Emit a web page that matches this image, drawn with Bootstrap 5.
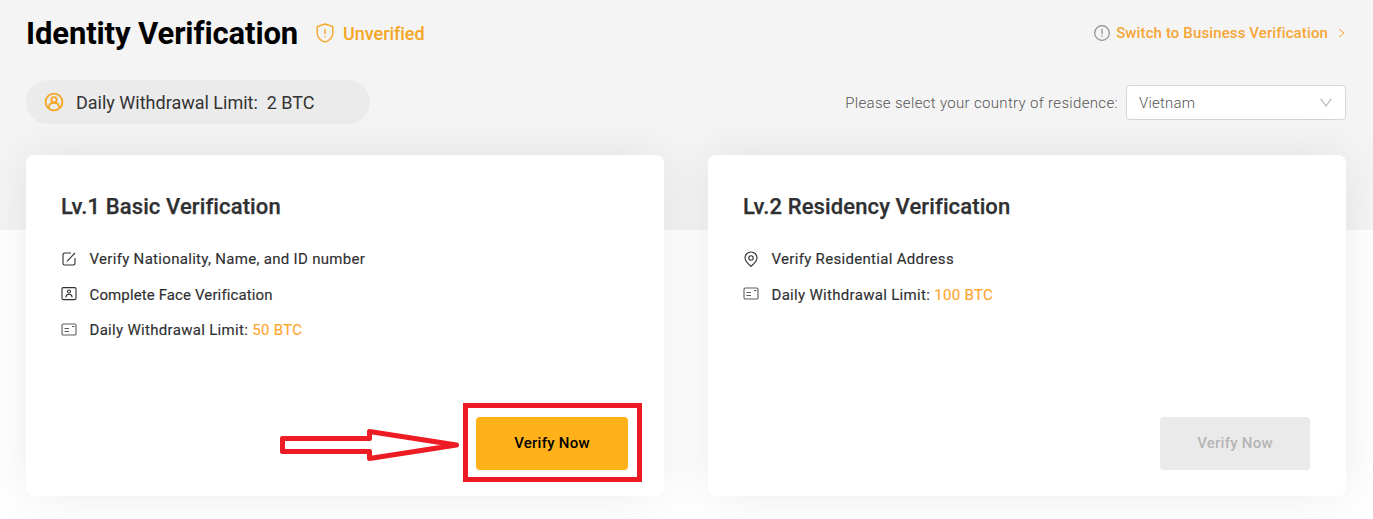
<!DOCTYPE html>
<html lang="en">
<head>
<meta charset="utf-8">
<meta name="viewport" content="width=device-width, initial-scale=1">
<title>Identity Verification</title>
<link href="https://cdn.jsdelivr.net/npm/bootstrap@5.3.0/dist/css/bootstrap.min.css" rel="stylesheet">
<style>
body{font-family:Roboto,"Liberation Sans",sans-serif;background:linear-gradient(#f4f4f4 230px,#fff 230px) no-repeat;color:#2f3032;height:519px;overflow:hidden}
svg{display:block;flex:none;fill:none;stroke:currentColor}
.page-wrap{padding:12px 27px 0 26px}
.head-row{height:42px}
.page-title{font-size:31px;font-weight:700;color:#000;letter-spacing:-.12px;line-height:42px;padding-top:1px}
.status{color:#f5a623;font-size:18px;font-weight:500;margin-left:18px;letter-spacing:-.05px}
.status-text{margin-left:9px}
.switch-link{color:#f5a636;font-size:15px;font-weight:500;letter-spacing:.12px;text-decoration:none}
.info-icon{color:#8c8c8c;margin-right:6px}
.next-icon{margin:0 1px 0 10px}
.limit-row{margin-top:25px;height:46px}
.limit-pill{background:#ebebeb;width:344px;height:44px;padding-left:18px;font-size:18px;color:#333;margin-top:-1px}
.limit-pill svg{color:#f5a623;margin-right:12px}
.limit-text{padding-top:2px}
.country-label{font-size:15px;font-weight:300;color:#555;letter-spacing:.33px;padding-top:2px}
.country-box{width:220px;height:35px;border:1px solid #d5d5d5;border-radius:4px;font-size:15px;font-weight:300;color:#555;letter-spacing:.2px;padding:0 13px 0 12px}
.country-name{padding-top:2px}
.country-box svg{color:#b8b8b8}
.levels{gap:44px;margin-top:30px}
.level-card{height:341px;border:0;border-radius:8px;box-shadow:0 0 50px rgba(0,0,0,.08);padding:36px 36px 26px 35px}
.level-title{font-size:22px;font-weight:500;line-height:32px;letter-spacing:.12px;margin-bottom:19px;-webkit-text-stroke:.25px currentColor}
.level-list li{height:35.5px;font-size:15px;line-height:35px;letter-spacing:.31px;color:#2f3032;-webkit-text-stroke:.15px currentColor}
.level-list li.face-item{letter-spacing:.12px}
.level-list svg{width:16px;height:16px;margin:-2px 12.5px 0 0}
.card-icon{color:#5d5d5d}
.amount{color:#ffa62f}
.verify-btn{width:152px;height:53px;border:0;border-radius:4px;background:#ffb11a;color:#000;font-size:15px;font-weight:500;letter-spacing:.24px;box-shadow:0 2px 2px rgba(0,0,0,.04)}
.verify-btn:disabled{width:150px;background:#eaeaea;color:#b5b5b5;opacity:1;box-shadow:none}
.frame-mark{left:437px;top:248px;width:179px;height:79px;border:5px solid #ed1c24;pointer-events:none}
.arrow-mark{left:252px;top:272px;color:#ed1c24}
</style>
</head>
<body>
<main class="page-wrap">
  <header class="head-row d-flex align-items-center justify-content-between">
    <div class="d-flex align-items-center">
      <h1 class="page-title m-0">Identity Verification</h1>
      <div class="status d-flex align-items-center">
        <svg width="18" height="20" viewBox="0 0 18 20" stroke-width="1.4"><path d="M9 1 16.8 3.6V10C16.8 14.5 13.7 17.4 9 19.2 4.3 17.4 1.2 14.5 1.2 10V3.6Z" stroke-linejoin="round"/><path d="M9 6v5M9 12.7v1.5"/></svg>
        <span class="status-text">Unverified</span>
      </div>
    </div>
    <a href="#" class="switch-link d-flex align-items-center">
      <svg class="info-icon" width="16" height="16" viewBox="0 0 16 16" stroke-width="1.2"><circle cx="8" cy="8" r="7.3"/><path d="M8 4v5.2M8 10.5v1.3"/></svg>
      <span>Switch to Business Verification</span>
      <svg class="next-icon" width="7" height="10" viewBox="0 0 7 10"><path d="M1 1 6 5 1 9"/></svg>
    </a>
  </header>
  <section class="limit-row d-flex align-items-center justify-content-between">
    <div class="limit-pill rounded-pill d-flex align-items-center">
      <svg width="20" height="20" viewBox="0 0 20 20" stroke-width="1.8"><circle cx="10" cy="10" r="8.4"/><circle cx="10" cy="7.8" r="2.7"/><path d="M5 15.8V15c0-2.6 2.2-4.2 5-4.2s5 1.600 5 4.200v.8"/></svg>
      <span class="limit-text">Daily Withdrawal Limit:&nbsp; 2 BTC</span>
    </div>
    <div class="d-flex align-items-center">
      <span class="country-label me-2">Please select your country of residence:</span>
      <div class="country-box bg-white d-flex align-items-center justify-content-between">
        <span class="country-name">Vietnam</span>
        <svg width="12" height="9" viewBox="0 0 12 9" stroke-width="1.2"><path d="M.7.7 6 8 11.3.7"/></svg>
      </div>
    </div>
  </section>
  <section class="levels d-flex">
    <article class="level-card card w-50">
      <h2 class="level-title">Lv.1 Basic Verification</h2>
      <ul class="level-list list-unstyled m-0">
        <li class="d-flex align-items-center"><svg viewBox="0 0 16 16" stroke-width="1.1"><path d="M10 2H3.7A1.7 1.7 0 0 0 2 3.7v8.6A1.7 1.7 0 0 0 3.7 14h8.6a1.7 1.7 0 0 0 1.7-1.7V7M6 10.3 14 2"/></svg><span>Verify Nationality, Name, and ID number</span></li>
        <li class="face-item d-flex align-items-center"><svg viewBox="0 0 16 16" stroke-width="1.1"><rect x="1" y="1.6" width="14" height="12" rx="1.3"/><circle cx="8" cy="5.5" r="1.5"/><path d="M5 11.4v-.6c0-1.7 1.4-2.5 3-2.5s3 .8 3 2.5v.6"/></svg><span>Complete Face Verification</span></li>
        <li class="d-flex align-items-center"><svg class="card-icon" viewBox="0 0 16 16" stroke-width="1.1"><rect x="1" y="2" width="14" height="11" rx="1.3"/><path d="M3.5 6.5h4.500M3.500 9.500h4.500M11 4.500h2.500"/></svg><span>Daily Withdrawal Limit: <span class="amount">50 BTC</span></span></li>
      </ul>
      <button type="button" class="verify-btn btn p-0 mt-auto ms-auto">Verify Now</button>
      <div class="frame-mark position-absolute"></div>
      <svg class="arrow-mark position-absolute" width="184" height="36" viewBox="0 0 184 36" stroke-width="5" stroke-linejoin="round"><path d="M4.5 11.5H91.5V4.500L178.500 18 91.500 31.500V24.500H4.500Z"/></svg>
    </article>
    <article class="level-card card w-50">
      <h2 class="level-title">Lv.2 Residency Verification</h2>
      <ul class="level-list list-unstyled m-0">
        <li class="d-flex align-items-center"><svg viewBox="0 0 16 16" stroke-width="1.1"><path d="M8 15.3C4.800 12.500 2 10.300 2 7a6 6 0 0 1 12 0C14 10.300 11.200 12.500 8 15.300Z"/><circle cx="8" cy="7" r="2.200"/></svg><span>Verify Residential Address</span></li>
        <li class="d-flex align-items-center"><svg class="card-icon" viewBox="0 0 16 16" stroke-width="1.1"><rect x="1" y="2" width="14" height="11" rx="1.3"/><path d="M3.500 6.500h4.500M3.500 9.500h4.500M11 4.500h2.500"/></svg><span>Daily Withdrawal Limit: <span class="amount">100 BTC</span></span></li>
      </ul>
      <button type="button" class="verify-btn btn p-0 mt-auto ms-auto" disabled>Verify Now</button>
    </article>
  </section>
</main>
<script src="https://cdn.jsdelivr.net/npm/bootstrap@5.3.0/dist/js/bootstrap.bundle.min.js"></script>
</body>
</html>
